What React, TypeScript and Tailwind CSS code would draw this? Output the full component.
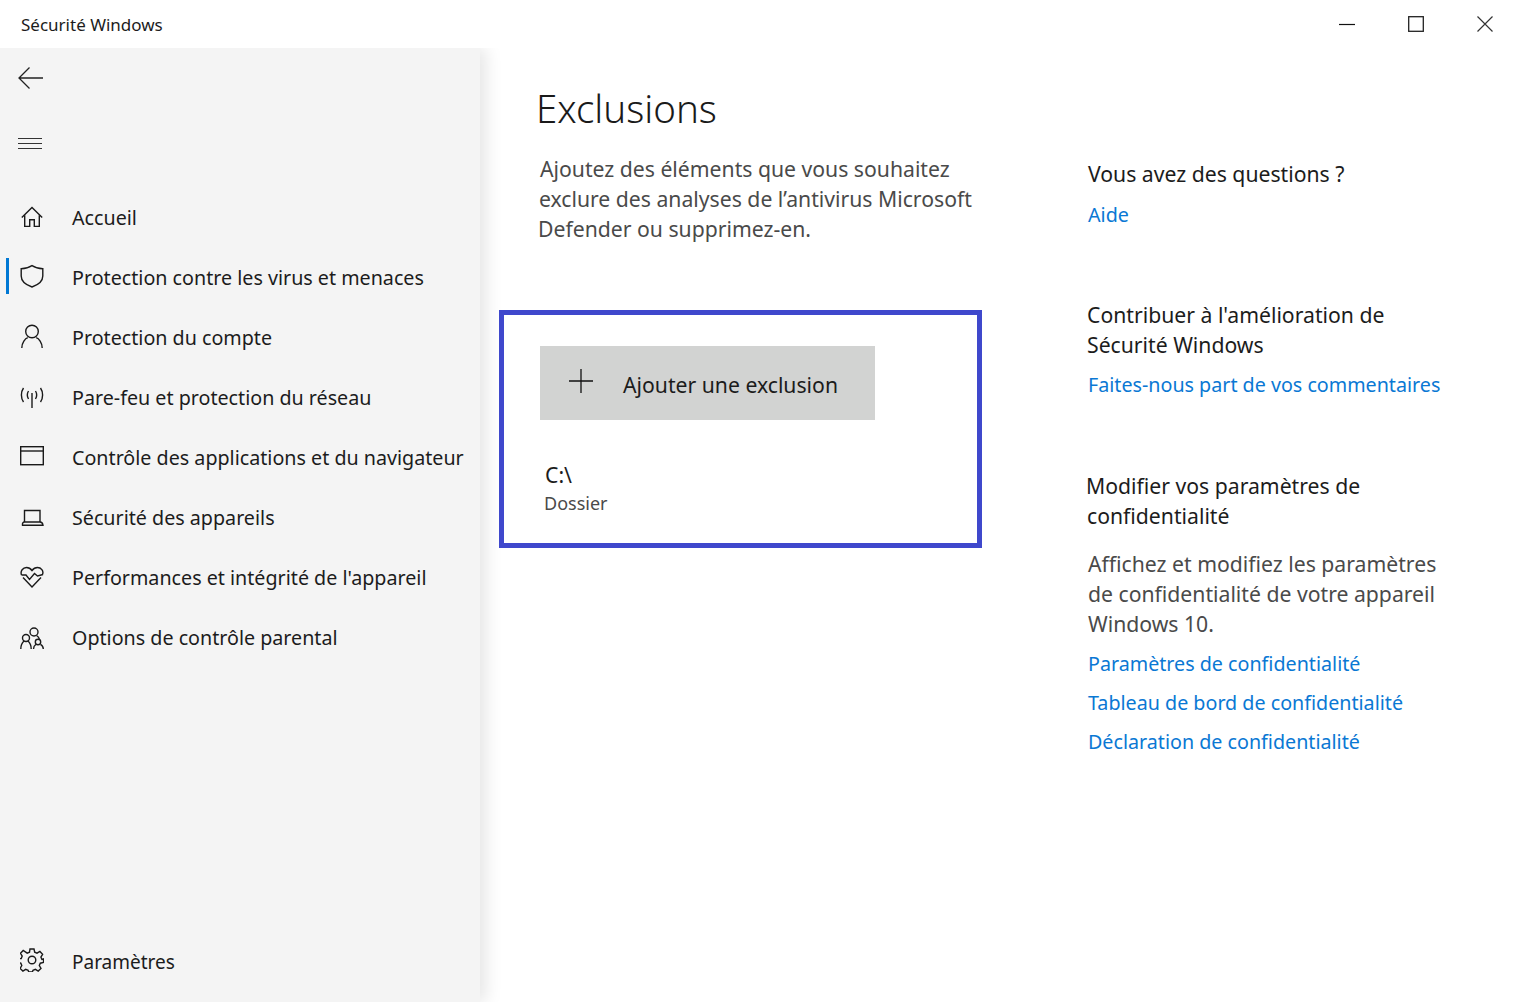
import { FC, ReactNode } from "react";

const Icon: FC<{ children: ReactNode; className?: string }> = ({ children, className }) => (
  <svg
    viewBox="0 0 24 24"
    width={24}
    height={24}
    fill="none"
    stroke="#1a1a1a"
    strokeWidth={1.4}
    className={`shrink-0 ${className ?? ""}`}
  >
    {children}
  </svg>
);

const navItems: { label: string; icon: ReactNode; shift: string; active?: boolean }[] = [
  {
    label: "Accueil",
    shift: "-mt-0.5",
    icon: (
      <>
        <path d="M1.800 12.500 12 2.500l10.200 10" />
        <path d="M4.700 10.200v11.200h5v-6.600h4.600v6.600h5V10.200" />
      </>
    ),
  },
  {
    label: "Protection contre les virus et menaces",
    shift: "-mt-1",
    active: true,
    icon: (
      <path d="M12 1.600c3 2 6.500 3 10.800 3.100v7.300c0 5-3.600 8.500-10.800 11-7.200-2.500-10.800-6-10.800-11V4.700C5.500 4.600 9 3.600 12 1.600Z" />
    ),
  },
  {
    label: "Protection du compte",
    shift: "-mt-1",
    icon: (
      <>
        <circle cx="12" cy="7.500" r="6.300" />
        <path d="M1.800 24c0-5.500 3.500-9.500 6-10.300M22.200 24c0-5.500-3.500-9.500-6-10.300" />
      </>
    ),
  },
  {
    label: "Pare-feu et protection du réseau",
    shift: "-mt-0.5",
    icon: (
      <>
        <path d="M12 8v15" />
        <path d="M8.500 6c-1.500 2.500-1.500 5.500 0 8M15.500 6c1.500 2.500 1.500 5.500 0 8" />
        <path d="M3.500 3c-2.800 4-2.800 10 0 14M20.500 3c2.800 4 2.800 10 0 14" />
      </>
    ),
  },
  {
    label: "Contrôle des applications et du navigateur",
    shift: "-mt-1",
    icon: (
      <>
        <rect x="0.700" y="2.700" width="22.600" height="18" />
        <path d="M.700 7h22.600" />
      </>
    ),
  },
  {
    label: "Sécurité des appareils",
    shift: "-mt-0.5",
    icon: (
      <>
        <path d="M4.500 17V5.500h15.500V17" />
        <path d="M2.500 20.300h20.500c-.2-1.800-.8-3.300-3-3.300H4.500c-1.500 0-2.300 1.500-2 3.300Z" />
      </>
    ),
  },
  {
    label: "Performances et intégrité de l'appareil",
    shift: "-mt-1",
    icon: (
      <>
        <path d="M3 13.500 12 23l9-9.500" />
        <path d="M1.500 11C0 7 3 3.500 6.500 3.500c2.500 0 4 1 5.500 3 1.500-2 3-3 5.500-3 3.500 0 6.500 3.500 5 7" />
        <path d="M1.500 11h4.500l3.500 4.500 5-6 3 2.500 5.500-1.500" />
      </>
    ),
  },
  {
    label: "Options de contrôle parental",
    shift: "mt-0",
    icon: (
      <>
        <circle cx="14" cy="6" r="4" />
        <circle cx="6" cy="12" r="3.500" />
        <circle cx="18" cy="16" r="2.700" />
        <path d="M.800 23c0-3.500 1.500-6.500 3.200-8M11.200 23c0-3.500-1.500-6.500-3.200-8" />
        <path d="M13.500 23c0-1.800.8-3.500 2.500-4.700M23.300 23c0-1.800-.8-3.500-2.800-4.700" />
        <path d="M16.500 9.500c1.500.8 2.500 2 3 4" />
      </>
    ),
  },
];

const Link: FC<{ children: ReactNode; className?: string }> = ({ children, className }) => (
  <a className={`ml-px block text-[19.700px] text-[#0a78d4] ${className ?? ""}`}>{children}</a>
);

export default function App() {
  return (
    <div className="h-[1002px] w-[1520px] overflow-hidden bg-white text-[21.200px] leading-[30px] text-[#1c1c1c] [font-family:'Noto_Sans',sans-serif]">
      <header className="relative z-10 flex h-12 items-center justify-between bg-white">
        <span className="pl-[21px] text-[17px] leading-none">Sécurité Windows</span>
        <div className="flex items-center gap-[53px] pr-[27px]">
          <svg width="16" height="16" viewBox="0 0 16 16" fill="none" stroke="#111" strokeWidth={1.2}>
            <path d="M0 8.500h16" />
          </svg>
          <svg width="16" height="16" viewBox="0 0 16 16" fill="none" stroke="#222" strokeWidth={1.3}>
            <rect x="0.700" y="0.700" width="14.600" height="14.600" />
          </svg>
          <svg width="16" height="16" viewBox="0 0 16 16" fill="none" stroke="#333" strokeWidth={1.2}>
            <path d="M.500.500l15 15M15.500.500l-15 15" />
          </svg>
        </div>
      </header>

      <div className="flex h-[954px]">
        <aside className="flex w-[480px] shrink-0 flex-col bg-[#f4f4f4] pb-[11px] text-[19.700px] shadow-[6px_0_16px_rgba(0,0,0,0.10)]">
          <div className="flex h-[60px] items-center pl-[18px]">
            <svg width="25" height="22" viewBox="0 0 25 22" fill="none" stroke="#222" strokeWidth={1.3}>
              <path d="M25 11H1M11.500.500 1 11l10.500 10.500" />
            </svg>
          </div>
          <div className="mt-[5px] flex h-[60px] flex-col justify-center gap-1 pl-[18px]">
            <div className="h-px w-6 bg-[#333]" />
            <div className="h-px w-6 bg-[#333]" />
            <div className="h-px w-6 bg-[#333]" />
          </div>
          <nav className="mt-[15px] flex flex-col">
            {navItems.map((item) => (
              <div key={item.label} className="relative flex h-[60px] items-center pl-5">
                {item.active && <div className="absolute left-1.5 top-2.5 h-9 w-[3px] bg-[#0078d4]" />}
                <Icon className={item.shift}>{item.icon}</Icon>
                <span className="-mt-px ml-7 whitespace-nowrap">{item.label}</span>
              </div>
            ))}
          </nav>
          <div className="mt-auto flex h-[60px] items-center pl-5">
            <Icon className="-mt-0.5">
              <circle cx="12" cy="12" r="3.800" />
              <path d="M10 1h4l.7 3.200 2.300 1 2.900-1.700 2.700 2.800-1.700 2.800 1 2.400L23.500 11v3.500l-3.200.7-1 2.300 1.700 2.900-2.800 2.700-2.800-1.700-2.400 1-.7 1.600h-3.500l-.7-1.600-2.400-1-2.800 1.700-2.800-2.700 1.700-2.900-1-2.300-3.200-.7V11l3.600-.5 1-2.400-1.700-2.800 2.700-2.800L7.200 5.200l2.300-1L10 1Z" />
            </Icon>
            <span className="ml-7 mt-0.5 text-[19px]">Paramètres</span>
          </div>
        </aside>

        <main className="flex min-w-0 flex-1">
          <section className="w-[587px] shrink-0 pl-[19px] pt-[32px]">
            <h1 className="ml-[37px] text-[38.500px] font-light leading-[56px] text-[#1a1a1a]">Exclusions</h1>
            <p className="ml-[41px] mt-[18px] text-[#4a4a4a]">
              <span className="block">Ajoutez des éléments que vous souhaitez</span>
              <span className="-ml-px block">exclure des analyses de l’antivirus Microsoft</span>
              <span className="-ml-0.5 block">Defender ou supprimez-en.</span>
            </p>
            <div className="mt-[66px] h-[238px] w-[483px] border-[5px] border-[#3f48cc] px-9 pt-[31px]">
              <button className="flex h-[74px] w-[335px] items-center bg-[#d2d3d2] pl-[29px] text-[21.200px]">
                <svg width="24" height="24" viewBox="0 0 24 24" fill="none" stroke="#111" strokeWidth={1.3} className="-mt-1">
                  <path d="M12 0v24M0 12h24" />
                </svg>
                <span className="ml-[30px] pt-[3px]">Ajouter une exclusion</span>
              </button>
              <div className="ml-1 mt-10 text-[#1c1c1c]">
                <div className="ml-px leading-[30px]">C:\</div>
                <div className="text-[18px] leading-[26px] text-[#4a4a4a]">Dossier</div>
              </div>
            </div>
          </section>

          <section className="flex-1 pl-5 pt-[111px]">
            <h2 className="ml-px text-[#1c1c1c]">Vous avez des questions ?</h2>
            <Link className="mt-[11px]">Aide</Link>

            <h2 className="mt-[70px]">
              <span className="block">Contribuer à l'amélioration de</span>
              <span className="block">Sécurité Windows</span>
            </h2>
            <Link className="mt-[10px]">Faites-nous part de vos commentaires</Link>

            <h2 className="-ml-px mt-[71px]">
              <span className="block">Modifier vos paramètres de</span>
              <span className="ml-px block">confidentialité</span>
            </h2>
            <p className="ml-px mt-[18px] text-[#4a4a4a]">
              <span className="block">Affichez et modifiez les paramètres</span>
              <span className="block">de confidentialité de votre appareil</span>
              <span className="block">Windows 10.</span>
            </p>
            <Link className="mt-[10px]">Paramètres de confidentialité</Link>
            <Link className="mt-[9px]">Tableau de bord de confidentialité</Link>
            <Link className="mt-[9px]">Déclaration de confidentialité</Link>
          </section>
        </main>
      </div>
    </div>
  );
}
